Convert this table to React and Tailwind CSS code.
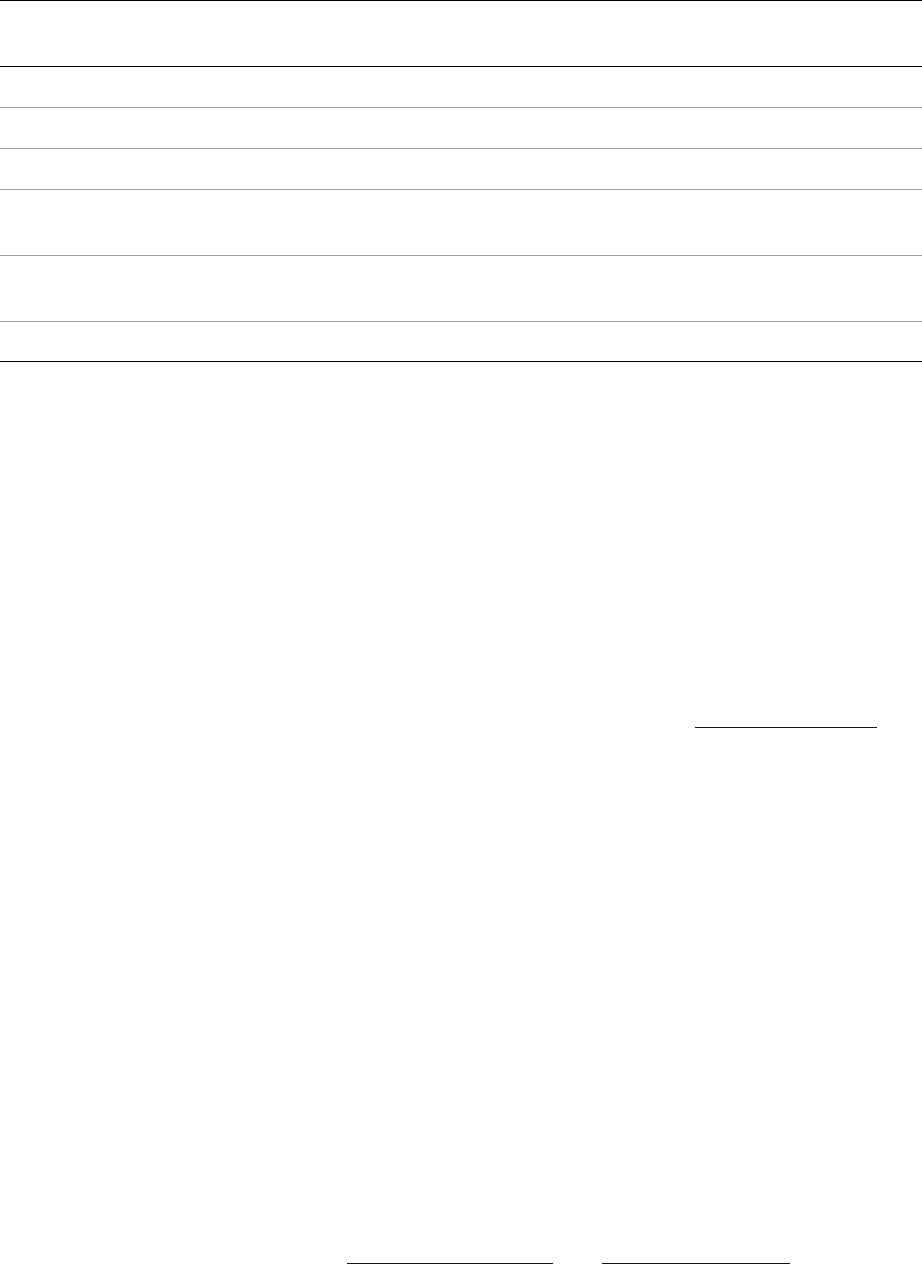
export default function App() {
  return (
    <div className="w-[922px] h-[1264px] bg-white overflow-hidden" style={{ fontFamily: '"Liberation Sans", Arial, sans-serif' }}>
      <div className="flex flex-col border-t border-black">
        <div className="h-[66px] border-b border-black"></div>
        <div className="h-[41px] border-b border-[#a0a0a0]"></div>
        <div className="h-[41px] border-b border-[#a0a0a0]"></div>
        <div className="h-[41px] border-b border-[#a0a0a0]"></div>
        <div className="h-[66px] border-b border-[#a0a0a0]"></div>
        <div className="h-[66px] border-b border-[#a0a0a0]"></div>
        <div className="h-[40px] border-b border-black"></div>
      </div>
      <div className="h-[365px]"></div>
      <div className="flex pl-[695px]">
        <a href="#" className="block w-[182px] h-px bg-[#0000cc]" aria-label="link"></a>
      </div>
      <div className="h-[535px]"></div>
      <div className="flex pl-[347px] gap-[49px]">
        <a href="#" className="block w-[206px] h-px bg-[#0000cc]" aria-label="link"></a>
        <a href="#" className="block w-[188px] h-px bg-[#0000cc]" aria-label="link"></a>
      </div>
    </div>
  );
}
